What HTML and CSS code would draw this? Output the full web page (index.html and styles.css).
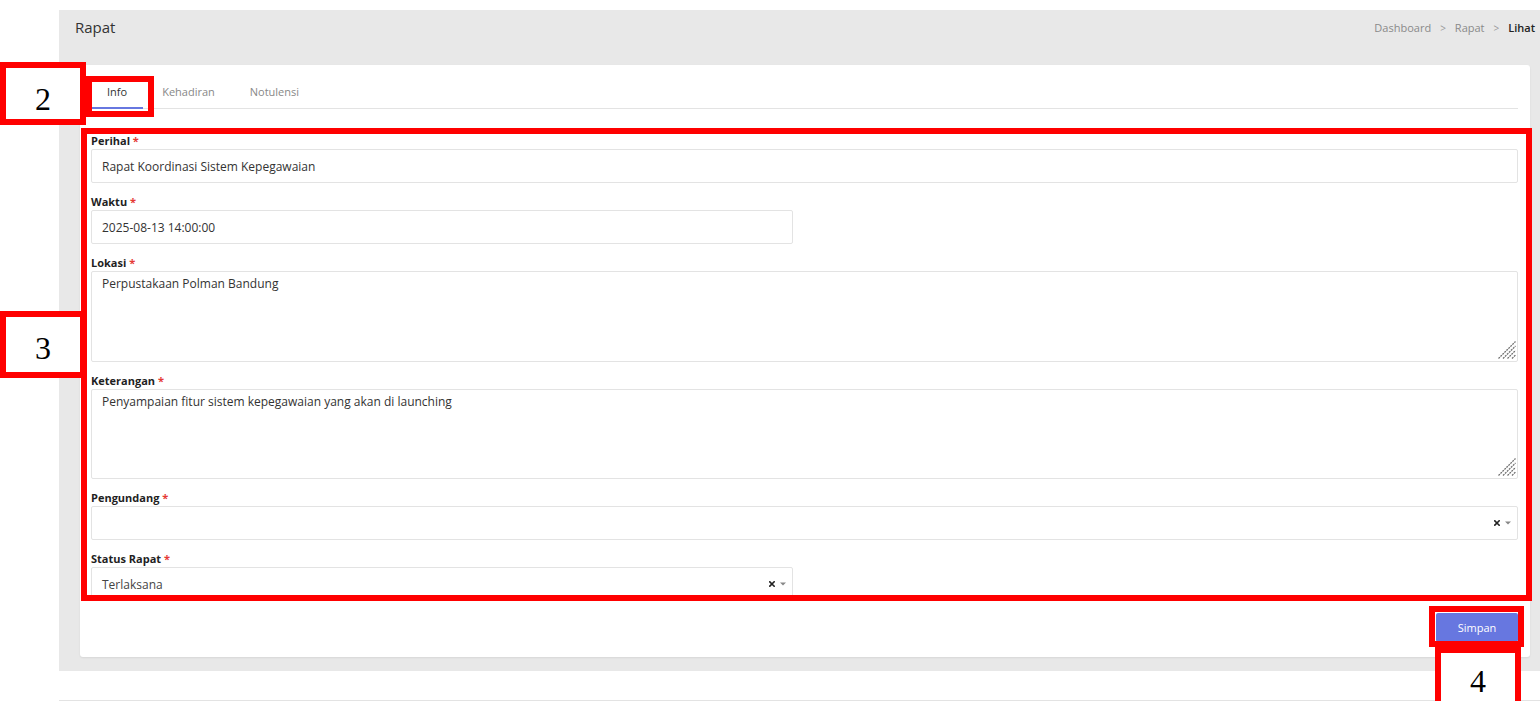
FILE: index.html
```html
<!DOCTYPE html>
<html lang="id">
<head>
<meta charset="utf-8">
<title>Rapat - Lihat</title>
<link rel="stylesheet" href="styles.css">
</head>
<body>
<div class="page">
  <section class="panel">
    <header class="panel-head">
      <h1 class="title">Rapat</h1>
      <nav class="crumbs">
        <span class="crumb">Dashboard</span><span class="sep">&gt;</span>
        <span class="crumb">Rapat</span><span class="sep">&gt;</span>
        <span class="crumb current">Lihat</span>
      </nav>
    </header>
    <div class="card">
      <ul class="tabs">
        <li class="tab active">Info</li>
        <li class="tab">Kehadiran</li>
        <li class="tab">Notulensi</li>
      </ul>
      <form class="form">
        <div class="field">
          <label class="label">Perihal <span class="req">*</span></label>
          <input class="control" type="text" value="Rapat Koordinasi Sistem Kepegawaian" readonly>
        </div>
        <div class="field">
          <label class="label">Waktu <span class="req">*</span></label>
          <input class="control half" type="text" value="2025-08-13 14:00:00" readonly>
        </div>
        <div class="field">
          <label class="label">Lokasi <span class="req">*</span></label>
          <div class="area-wrap">
            <textarea class="control area" readonly>Perpustakaan Polman Bandung</textarea>
            <svg class="grip" width="18" height="18" viewBox="0 0 18 18"><path d="M0.5 17.5L17.5 0.5M5 17.5L17.5 5M9.5 17.5L17.5 9.5M14 17.5L17.5 14" stroke="#6f6f6f" stroke-width="1.3" stroke-dasharray="2 0.8"/></svg>
          </div>
        </div>
        <div class="field">
          <label class="label">Keterangan <span class="req">*</span></label>
          <div class="area-wrap">
            <textarea class="control area area-b" readonly>Penyampaian fitur sistem kepegawaian yang akan di launching</textarea>
            <svg class="grip" width="18" height="18" viewBox="0 0 18 18"><path d="M0.5 17.5L17.5 0.5M5 17.5L17.5 5M9.5 17.5L17.5 9.5M14 17.5L17.5 14" stroke="#6f6f6f" stroke-width="1.3" stroke-dasharray="2 0.8"/></svg>
          </div>
        </div>
        <div class="field">
          <label class="label">Pengundang <span class="req">*</span></label>
          <div class="select">
            <span class="select-text"></span>
            <span class="select-icons">
              <svg class="ico-x" width="6" height="6" viewBox="0 0 6 6"><path d="M0.8 0.8L5.2 5.2M5.2 0.8L0.8 5.2" stroke="#222" stroke-width="1.6" stroke-linecap="square"/></svg>
              <svg class="ico-caret" width="6" height="4" viewBox="0 0 6 4"><path d="M0 0.5H6L3 3.5Z" fill="#888"/></svg>
            </span>
          </div>
        </div>
        <div class="field">
          <label class="label">Status Rapat <span class="req">*</span></label>
          <div class="select half">
            <span class="select-text">Terlaksana</span>
            <span class="select-icons">
              <svg class="ico-x" width="6" height="6" viewBox="0 0 6 6"><path d="M0.8 0.8L5.2 5.2M5.2 0.8L0.8 5.2" stroke="#222" stroke-width="1.6" stroke-linecap="square"/></svg>
              <svg class="ico-caret" width="6" height="4" viewBox="0 0 6 4"><path d="M0 0.5H6L3 3.5Z" fill="#888"/></svg>
            </span>
          </div>
        </div>
      </form>
      <div class="actions">
        <button class="btn" type="button">Simpan</button>
      </div>
    </div>
  </section>
  <footer class="footer"></footer>
</div>

<div class="mark mark-2"><span class="num">2</span></div>
<div class="mark mark-info"></div>
<div class="mark mark-form"></div>
<div class="mark mark-3"><span class="num">3</span></div>
<div class="mark mark-btn"></div>
<div class="mark mark-4"><span class="num">4</span></div>
</body>
</html>
```

FILE: styles.css
```css
* { box-sizing: border-box; }

html, body {
  margin: 0;
  padding: 0;
  background: #ffffff;
  font-family: "Open Sans", "Liberation Sans", sans-serif;
  color: #333;
  overflow: hidden;
}

.page {
  padding-top: 10px;
  padding-left: 59px;
  width: 1540px;
  height: 701px;
}

.panel {
  background: #e8e8e8;
  padding: 0 10px 14px 21px;
}

.panel-head {
  height: 55px;
  display: flex;
  align-items: flex-start;
  justify-content: space-between;
  margin-left: -5px;
  margin-right: -5px;
  padding: 5px 0 0 0;
}

.title {
  margin: 0;
  font-size: 15px;
  font-weight: 400;
  line-height: 24px;
  color: #333;
}

.crumbs {
  display: flex;
  align-items: center;
  font-size: 11px;
  line-height: 24px;
  color: #8a8a8a;
  padding-top: 1px;
}

.crumb.current {
  color: #222;
  font-weight: 600;
}

.sep {
  padding: 0 9px;
  font-size: 10px;
  color: #999;
}

.card {
  background: #fff;
  border-radius: 3px;
  box-shadow: 0 1px 2px rgba(0, 0, 0, 0.08);
  padding: 13px 12px 15px 11px;
}

.tabs {
  list-style: none;
  margin: 0;
  padding: 0;
  display: flex;
  border-bottom: 1px solid #e3e3e3;
}

.tab {
  height: 31px;
  line-height: 28px;
  padding: 0 16px;
  margin-right: 3px;
  margin-bottom: -1px;
  font-size: 11px;
  color: #888;
  border-bottom: 2px solid transparent;
}

.tab.active {
  color: #333;
  font-weight: 500;
  border-bottom-color: #6777e0;
}

.form {
  margin-top: 25px;
}

.field {
  margin-bottom: 12px;
}

.label {
  display: block;
  height: 15px;
  line-height: 14px;
  font-size: 11px;
  font-weight: 700;
  color: #1f1f1f;
}

.req {
  color: #e53935;
}

.control {
  display: block;
  width: 100%;
  height: 34px;
  border: 1px solid #e3e3e3;
  border-radius: 2px;
  background: #fff;
  padding: 0 10px;
  font-family: "Open Sans", "Liberation Sans", sans-serif;
  font-size: 12px;
  color: #333;
  outline: none;
}

.half {
  width: 702px;
}

.area-wrap {
  position: relative;
}

.area {
  height: 91px;
  padding: 3px 10px;
  line-height: 18px;
  resize: none;
}

.area-b {
  height: 90px;
}

.grip {
  position: absolute;
  right: 2px;
  bottom: 3px;
  display: block;
}

.select {
  display: flex;
  align-items: center;
  justify-content: space-between;
  height: 34px;
  border: 1px solid #e3e3e3;
  border-radius: 2px;
  padding: 0 6px 0 10px;
  font-size: 12px;
  color: #444;
}

.select-icons {
  display: flex;
  align-items: center;
  gap: 5px;
}

.ico-x, .ico-caret {
  display: block;
}

.actions {
  display: flex;
  justify-content: flex-end;
}

.btn {
  width: 82px;
  height: 29px;
  border: none;
  border-radius: 2px;
  background: #6777e0;
  color: #fff;
  font-family: "Open Sans", "Liberation Sans", sans-serif;
  font-size: 11px;
}

.footer {
  margin-top: 29px;
  border-top: 1px solid #e3e3e3;
  height: 2px;
}

/* annotation overlays */
.mark {
  position: absolute;
  border: 6px solid #ff0000;
}

.mark-2, .mark-3, .mark-4 {
  background: #fff;
  display: flex;
  justify-content: center;
  align-items: flex-start;
}

.num {
  font-family: "Liberation Serif", "Times New Roman", serif;
  font-size: 32px;
  line-height: 32px;
  color: #000;
}

.mark-2 { left: 0; top: 62px; width: 86px; height: 63px; padding-top: 15px; }
.mark-info { left: 86px; top: 76px; width: 68px; height: 41px; }
.mark-form { left: 81px; top: 128px; width: 1451px; height: 473px; }
.mark-3 { left: 0; top: 311px; width: 86px; height: 67px; padding-top: 15px; }
.mark-btn { left: 1429px; top: 606px; width: 95px; height: 41px; }
.mark-4 { left: 1435px; top: 647px; width: 86px; height: 70px; padding-top: 12px; }
```
